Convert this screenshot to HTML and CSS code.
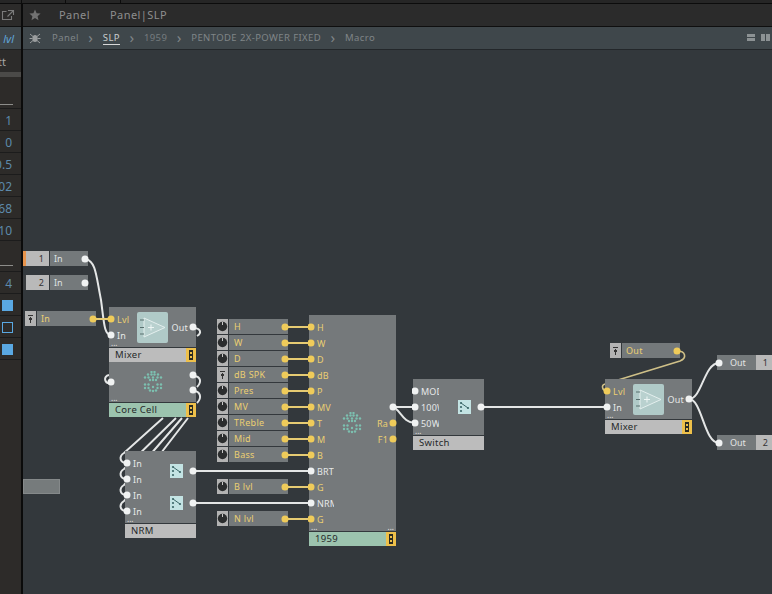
FILE: index.html
```html
<!DOCTYPE html>
<html lang="en">
<head>
<meta charset="utf-8">
<title>Panel | SLP</title>
<link rel="stylesheet" href="styles.css">
</head>
<body>
<svg class="defs" width="0" height="0" aria-hidden="true">
  <symbol id="tag" viewBox="0 0 10 14"><rect width="10" height="14" fill="#eec04a"/><rect x="3" y="2" width="4" height="10" fill="#2a2a22"/><rect x="4" y="4" width="2" height="2" fill="#eec04a"/><rect x="4" y="8" width="2" height="2" fill="#eec04a"/></symbol>
  <symbol id="knob" viewBox="0 0 11 15"><circle cx="5.5" cy="7.5" r="4.7" fill="#2b2d2e"/><rect x="5" y="3" width="1" height="3" fill="#c8c8c8"/></symbol>
  <symbol id="fader" viewBox="0 0 11 15"><rect x="3" y="4" width="5" height="1" fill="#333"/><rect x="5" y="6" width="1" height="6" fill="#333"/><rect x="4" y="7" width="3" height="2" fill="#333"/></symbol>
  <symbol id="amp" viewBox="0 0 31 31"><rect width="31" height="31" rx="2" fill="#b0cac8"/><path d="M7 6 28 15.5 7 25Z" fill="#b9d1cf" stroke="#e4efee" stroke-width="1"/><path d="M3 8h4M3 15.5h4M3 22h4" stroke="#59706f"/><path d="M11 15.5h6M14 12.5v6" stroke="#eef6f5"/></symbol>
  <symbol id="switch" viewBox="0 0 13 14"><rect width="13" height="14" fill="#c3e3e3"/><g fill="#3b6667"><circle cx="3" cy="3" r="1.1"/><circle cx="3" cy="7" r="1.1"/><circle cx="3" cy="11" r="1.1"/><circle cx="10" cy="8" r="1.1"/></g><path d="M3 3 10 8" stroke="#3b6667"/></symbol>
  <symbol id="hex" viewBox="0 0 20 22"><g fill="#7cc0b0"><circle cx="8.5" cy="1" r="1.2"/><circle cx="11.5" cy="1" r="1.2"/><circle cx="5" cy="3.5" r="1.2"/><circle cx="8.5" cy="3.5" r="1.2"/><circle cx="11.5" cy="3.5" r="1.2"/><circle cx="15" cy="3.5" r="1.2"/><circle cx="2" cy="6.5" r="1.2"/><circle cx="5.5" cy="6.5" r="1.2"/><circle cx="10" cy="6.5" r="1.2"/><circle cx="14.5" cy="6.5" r="1.2"/><circle cx="18" cy="6.5" r="1.2"/><circle cx="7" cy="9" r="1.2"/><circle cx="10" cy="9" r="1.2"/><circle cx="13" cy="9" r="1.2"/><circle cx="2" cy="13.5" r="1.2"/><circle cx="5.5" cy="13.5" r="1.2"/><circle cx="14.5" cy="13.5" r="1.2"/><circle cx="18" cy="13.5" r="1.2"/><circle cx="2" cy="17" r="1.2"/><circle cx="5.5" cy="17" r="1.2"/><circle cx="10" cy="16" r="1.2"/><circle cx="14.5" cy="17" r="1.2"/><circle cx="18" cy="17" r="1.2"/><circle cx="7" cy="19.5" r="1.2"/><circle cx="10" cy="20" r="1.2"/><circle cx="13" cy="19.5" r="1.2"/></g></symbol>
</svg>

<div class="app">
  <div class="topstrip"><span class="seg s1"></span><span class="seg s2"></span><span class="seg s3"></span></div>
  <div class="workspace">
    <aside class="sidebar">
      <div class="side-head"><svg width="14" height="12" viewBox="0 0 14 12"><path d="M5.5 2.5H1.5V10.5H10.5V7M7 1.5h5.5V6M12.5 1.5 6.5 7.5" fill="none" stroke="#7b7b7b" stroke-width="1.1"/></svg></div>
      <div class="side-crumb">lvl</div>
      <div class="side-name">Lvl tt</div>
      <div class="side-strip"></div>
      <div class="side-gap"><span class="side-rule"></span></div>
      <div class="side-row">1</div>
      <div class="side-row">0</div>
      <div class="side-row">0.5</div>
      <div class="side-row">02</div>
      <div class="side-row">68</div>
      <div class="side-row">10</div>
      <div class="side-gap2"><span class="side-rule"></span></div>
      <div class="side-row tall">4</div>
      <div class="side-row"><span class="check on"></span></div>
      <div class="side-row"><span class="check"></span></div>
      <div class="side-row"><span class="check on"></span></div>
    </aside>
    <main class="main">
      <nav class="tabs">
        <svg class="star" width="12" height="12" viewBox="0 0 12 12"><path d="M6 .5 7.6 4.2 11.6 4.6 8.6 7.2 9.5 11.2 6 9.1 2.5 11.2 3.4 7.2.4 4.6 4.4 4.2Z" fill="#727272"/></svg>
        <span class="tab">Panel</span>
        <span class="tab">Panel|SLP</span>
      </nav>
      <nav class="crumbs">
        <svg class="bug" width="12" height="12" viewBox="0 0 12 12"><ellipse cx="6" cy="6.5" rx="2.6" ry="3.6" fill="#9a9d9e"/><path d="M1 2 4 4.5M11 2 8 4.5M.5 6.5h3M11.5 6.5h-3M1 11 4 8.5M11 11 8 8.5" stroke="#9a9d9e"/></svg>
        <span class="crumb">Panel</span><span class="sep">›</span>
        <span class="crumb current">SLP</span><span class="sep">›</span>
        <span class="crumb dim">1959</span><span class="sep">›</span>
        <span class="crumb">PENTODE 2X-POWER FIXED</span><span class="sep">›</span>
        <span class="crumb">Macro</span>
        <span class="views"><i class="view-a"></i><i class="view-b"></i></span>
      </nav>
      <section class="canvas">
        <svg class="wires" width="749" height="544" viewBox="23 50 749 544" fill="none">
          <g class="w-white">
            <path d="M86 259C96 262 96 275 101 300C104 322 104 335 111 335"/>
            <path d="M193 328C201 328 202 333 197 336"/>
            <path d="M111 383C104 384 103 376 109 375"/>
            <path d="M193 376C201 376 202 382 197 387"/>
            <path d="M193 391C201 391 202 398 197 403"/>
            <path d="M127 463C119 463 119 456 124 453L163 418"/>
            <path d="M127 479C119 479 119 472 124 469L176 418"/>
            <path d="M127 495C119 495 119 488 124 485L182 418"/>
            <path d="M127 511C119 511 119 504 124 501L188 418"/>
            <path d="M193 471H311"/>
            <path d="M193 503H311"/>
            <path d="M393 407H415"/>
            <path d="M393 407C400 409 403 423 415 423"/>
            <path d="M481 407H607"/>
            <path d="M689 399C702 399 704 363 719 363"/>
            <path d="M689 399C702 399 704 443 719 443"/>
          </g>
          <g class="w-yellow">
            <path d="M94 319H111"/>
            <path d="M285 327H311M285 343H311M285 359H311M285 375H311M285 391H311M285 407H311M285 423H311M285 439H311M285 455H311M285 487H311M285 519H311"/>
          </g>
          <path class="w-olive" d="M677 351C686 351 687 358 680 361L618 380M607 391C602 391 601 385 605 384"/>
        </svg>

        <div class="stub" style="left:0;top:429px"></div>

        <div class="io" style="left:-1px;top:201px"><span class="mark orange"></span><span class="io-num left">1</span><span class="io-label">In<b class="dot w right"></b></span></div>
        <div class="io" style="left:-1px;top:225px"><span class="mark"></span><span class="io-num left">2</span><span class="io-label">In<b class="dot w right"></b></span></div>

        <div class="ctl wide" style="left:2px;top:261px"><span class="ctl-ic"><svg width="11" height="15"><use href="#fader"/></svg></span><span class="ctl-label">In<b class="dot y right"></b></span></div>

        <div class="node w87" style="left:86px;top:257px">
          <div class="body h40">
            <div class="pins"><div class="pin y"><b class="dot y"></b>Lvl</div><div class="pin"><b class="dot w"></b>In</div></div>
            <svg class="ampic" width="31" height="31"><use href="#amp"/></svg>
            <div class="pins end"><div class="pin out lower"><span>Out</span><b class="dot w"></b></div></div>
            <span class="dots">...</span>
          </div>
          <div class="title">Mixer<svg class="tagic" width="10" height="14"><use href="#tag"/></svg></div>
          <div class="body h40 core">
            <svg class="hexic" width="20" height="22"><use href="#hex"/></svg>
            <b class="dot w free" style="left:-1px;top:17px"></b>
            <b class="dot w free" style="right:0;top:10px"></b>
            <b class="dot w free" style="right:0;top:25px"></b>
            <span class="dots">...</span>
          </div>
          <div class="title green">Core Cell<svg class="tagic" width="10" height="14"><use href="#tag"/></svg></div>
        </div>

        <div class="node w71" style="left:102px;top:401px">
          <div class="body nrm">
            <div class="pins"><div class="pin"><b class="dot w"></b>In</div><div class="pin"><b class="dot w"></b>In</div><div class="pin"><b class="dot w"></b>In</div><div class="pin"><b class="dot w"></b>In</div></div>
            <svg class="swic a" width="13" height="14"><use href="#switch"/></svg>
            <svg class="swic b" width="13" height="14"><use href="#switch"/></svg>
            <b class="dot w free" style="right:0;top:17px"></b>
            <b class="dot w free" style="right:0;top:49px"></b>
            <span class="dots">...</span>
          </div>
          <div class="title">NRM</div>
        </div>

        <div class="panel-col" style="left:194px;top:269px">
          <div class="ctl"><span class="ctl-ic"><svg width="11" height="15"><use href="#knob"/></svg></span><span class="ctl-label">H<b class="dot y right"></b></span></div>
          <div class="ctl"><span class="ctl-ic"><svg width="11" height="15"><use href="#knob"/></svg></span><span class="ctl-label">W<b class="dot y right"></b></span></div>
          <div class="ctl"><span class="ctl-ic"><svg width="11" height="15"><use href="#knob"/></svg></span><span class="ctl-label">D<b class="dot y right"></b></span></div>
          <div class="ctl"><span class="ctl-ic"><svg width="11" height="15"><use href="#fader"/></svg></span><span class="ctl-label">dB SPK<b class="dot y right"></b></span></div>
          <div class="ctl"><span class="ctl-ic"><svg width="11" height="15"><use href="#knob"/></svg></span><span class="ctl-label">Pres<b class="dot y right"></b></span></div>
          <div class="ctl"><span class="ctl-ic"><svg width="11" height="15"><use href="#knob"/></svg></span><span class="ctl-label">MV<b class="dot y right"></b></span></div>
          <div class="ctl"><span class="ctl-ic"><svg width="11" height="15"><use href="#knob"/></svg></span><span class="ctl-label">TReble<b class="dot y right"></b></span></div>
          <div class="ctl"><span class="ctl-ic"><svg width="11" height="15"><use href="#knob"/></svg></span><span class="ctl-label">Mid<b class="dot y right"></b></span></div>
          <div class="ctl"><span class="ctl-ic"><svg width="11" height="15"><use href="#knob"/></svg></span><span class="ctl-label">Bass<b class="dot y right"></b></span></div>
          <div class="ctl skip"><span class="ctl-ic"><svg width="11" height="15"><use href="#knob"/></svg></span><span class="ctl-label">B lvl<b class="dot y right"></b></span></div>
          <div class="ctl skip"><span class="ctl-ic"><svg width="11" height="15"><use href="#knob"/></svg></span><span class="ctl-label">N lvl<b class="dot y right"></b></span></div>
        </div>

        <div class="node w87" style="left:286px;top:265px">
          <div class="body big">
            <div class="pins clip">
              <div class="pin y"><b class="dot y"></b>H</div><div class="pin y"><b class="dot y"></b>W</div><div class="pin y"><b class="dot y"></b>D</div><div class="pin y"><b class="dot y"></b>dB</div><div class="pin y"><b class="dot y"></b>P</div><div class="pin y"><b class="dot y"></b>MV</div><div class="pin y"><b class="dot y"></b>T</div><div class="pin y"><b class="dot y"></b>M</div><div class="pin y"><b class="dot y"></b>B</div><div class="pin"><b class="dot w"></b>BRT</div><div class="pin y"><b class="dot y"></b>G</div><div class="pin"><b class="dot w"></b>NRM</div><div class="pin y"><b class="dot y"></b>G</div>
            </div>
            <svg class="hexic mid" width="20" height="22"><use href="#hex"/></svg>
            <div class="pins end big-out"><div class="pin out"><b class="dot w"></b></div><div class="pin out y"><span>Ra</span><b class="dot y"></b></div><div class="pin out y"><span>F1</span><b class="dot y"></b></div></div>
            <span class="dots">...</span><span class="dots rt">...</span>
          </div>
          <div class="title green sep1">1959<svg class="tagic" width="10" height="14"><use href="#tag"/></svg></div>
        </div>

        <div class="node w71" style="left:390px;top:329px">
          <div class="body sw">
            <div class="pins clip wider"><div class="pin"><b class="dot w"></b>MOD</div><div class="pin"><b class="dot w"></b>100W</div><div class="pin"><b class="dot w"></b>50W</div></div>
            <svg class="swic sw1" width="13" height="14"><use href="#switch"/></svg>
            <b class="dot w free" style="right:0;top:25px"></b>
            <span class="dots">...</span>
          </div>
          <div class="title">Switch</div>
        </div>

        <div class="ctl short" style="left:587px;top:293px"><span class="ctl-ic"><svg width="11" height="15"><use href="#fader"/></svg></span><span class="ctl-label">Out<b class="dot y right"></b></span></div>

        <div class="node w87" style="left:582px;top:329px">
          <div class="body h40">
            <div class="pins"><div class="pin y"><b class="dot y"></b>Lvl</div><div class="pin"><b class="dot w"></b>In</div></div>
            <svg class="ampic" width="31" height="31"><use href="#amp"/></svg>
            <div class="pins end"><div class="pin out lower"><span>Out</span><b class="dot w"></b></div></div>
            <span class="dots">...</span>
          </div>
          <div class="title">Mixer<svg class="tagic" width="10" height="14"><use href="#tag"/></svg></div>
        </div>

        <div class="outnode" style="left:694px;top:305px"><span class="out-label"><b class="dot w"></b>Out</span><span class="io-num">1</span></div>
        <div class="outnode" style="left:694px;top:385px"><span class="out-label"><b class="dot w"></b>Out</span><span class="io-num">2</span></div>
      </section>
    </main>
  </div>
</div>
</body>
</html>
```

FILE: styles.css
```css
* { box-sizing: border-box; }
html, body { margin: 0; height: 100%; }
body {
  background: #33383c;
  font-family: "Noto Sans", sans-serif;
  font-size: 9px;
  overflow: hidden;
}
.defs { position: absolute; }
.app { width: 772px; height: 594px; display: flex; flex-direction: column; overflow: hidden; }

.topstrip { height: 4px; flex: none; display: flex; background: #262626; border-bottom: 1px solid #0c0c0c; }
.seg { border-right: 1px solid #0c0c0c; height: 3px; }
.s1 { width: 22px; }
.s2 { width: 44px; }
.s3 { width: 55px; }

.workspace { flex: 1; display: flex; min-height: 0; }

.sidebar { width: 23px; flex: none; background: #2d2b29; border-right: 2px solid #0b0b0b; display: flex; flex-direction: column; overflow: hidden; }
.side-head { height: 23px; display: flex; align-items: center; padding-left: 1px; background: #2c2b2a; border-bottom: 1px solid #111; }
.side-crumb { height: 23px; background: #3f474b; color: #5fa4d8; font-size: 11px; font-style: italic; display: flex; align-items: center; justify-content: flex-end; padding-right: 7px; border-bottom: 1px solid #222; }
.side-name { height: 22px; background: #2c2b2a; color: #a8a8a8; font-size: 11px; display: flex; align-items: center; justify-content: flex-end; padding-right: 15px; white-space: nowrap; }
.side-strip { height: 5px; background: #4b4a48; }
.side-gap { height: 32px; display: flex; align-items: flex-end; border-bottom: 1px solid #1c1c1c; }
.side-gap2 { height: 32px; display: flex; align-items: flex-end; padding-bottom: 5px; border-bottom: 1px solid #1c1c1c; margin-top: -1px; }
.side-gap .side-rule { margin-bottom: 3px; }
.side-rule { display: block; width: 13px; height: 1px; background: #8d8d8a; }
.side-row { height: 22px; flex: none; display: flex; align-items: center; justify-content: flex-end; padding: 1px 9px 0 0; color: #5d8aab; font-size: 12px; white-space: nowrap; border-bottom: 1px solid #1c1c1c; }
.check { width: 11px; height: 11px; margin-right: -1px; border: 1px solid #5aa8e2; }
.check.on { background: #5aa8e2; }

.main { flex: 1; min-width: 0; display: flex; flex-direction: column; }
.tabs { height: 23px; flex: none; display: flex; align-items: center; gap: 20px; padding: 0 0 2px 6px; background: #2b2b2b; border-bottom: 1px solid #0f0f0f; color: #8e8e8e; font-size: 11px; letter-spacing: .45px; }
.star { margin-right: -2px; margin-top: 2px; }
.crumbs { height: 23px; flex: none; display: flex; align-items: center; padding: 0 0 2px 6px; background: #3f474b; border-bottom: 1px solid #23272a; color: #7f8588; font-size: 9.5px; letter-spacing: .4px; }
.bug { margin-right: 11px; margin-top: 2px; }
.crumb.current { color: #c8cbcc; border-bottom: 1px solid #d8d8d8; line-height: 13px; height: 14px; margin-top: 2px; }
.crumb.dim { color: #767c7f; }
.sep { width: 24px; text-align: center; font-size: 15px; line-height: 15px; color: #7f8588; }
.views { margin-left: auto; margin-right: 2px; display: flex; gap: 6px; }
.views i { display: block; background: linear-gradient(#8c9294 0 3px, transparent 3px 4px, #8c9294 4px); width: 8px; height: 7px; }
.views i.view-b { width: 9px; background: linear-gradient(90deg, #8c9294 0 4px, transparent 4px 5px, #8c9294 5px); }

.canvas { flex: 1; position: relative; overflow: hidden; background: #33383c; }
.wires { position: absolute; left: 0; top: 0; }
.w-white path { stroke: #e4e6e6; stroke-width: 2; }
.w-yellow path { stroke: #e6cb73; stroke-width: 2; }
.w-olive { stroke: #cfc088; stroke-width: 1.6; }

.dot { display: block; width: 6px; height: 6px; border-radius: 50%; flex: none; }
.dot.w { background: #f0f2f2; box-shadow: 0 0 0 .5px #f0f2f2; }
.dot.y { background: #efcb5a; box-shadow: 0 0 0 .5px #efcb5a; }
.dot.free { position: absolute; }

.stub { position: absolute; width: 37px; height: 15px; background: #767b7c; border: 1px solid #85898a; }

.io { position: absolute; display: flex; height: 15px; color: #e2e2e2; }
.mark { width: 4px; background: #3a3d3f; }
.mark.orange { background: #e8944c; }
.io-num { width: 16px; background: #b9b9b9; color: #333; display: flex; align-items: center; justify-content: flex-end; padding-right: 4px; font-size: 9px; }
.io-num.left { width: 23px; padding-right: 5px; margin-right: 1px; }
.io-label { width: 38px; background: #74797b; display: flex; align-items: center; justify-content: space-between; padding-left: 4px; color: #dfe2e2; }

.ctl { display: flex; height: 15px; margin-bottom: 1px; }
.ctl.wide, .ctl.short { position: absolute; }
.ctl.skip { margin-top: 16px; }
.ctl-ic { width: 11px; background: #b3b3b3; margin-right: 1px; display: flex; }
.ctl-label { width: 59px; background: #74797b; color: #ebcf72; padding-left: 5px; letter-spacing: .3px; display: flex; align-items: center; justify-content: space-between; }
.ctl.wide .ctl-label { padding-left: 4px; }
.ctl.short .ctl-label { width: 58px; padding-left: 4px; }
.panel-col { position: absolute; display: flex; flex-direction: column; }

.node { position: absolute; display: flex; flex-direction: column; }
.w87 { width: 87px; }
.w71 { width: 71px; }
.body { position: relative; background: #75797b; display: flex; align-items: flex-start; }
.h40 { height: 40px; }
.core { justify-content: center; align-items: center; }
.nrm { height: 72px; }
.big { height: 216px; }
.sw { height: 56px; }
.title { position: relative; height: 14px; margin-top: 1px; background: #bcbcbc; color: #26292a; font-size: 9.5px; letter-spacing: .3px; line-height: 13px; padding-left: 6px; }
.title.green { background: #9cc3ae; }
.tagic { position: absolute; right: 0; top: 0; }
.pins { display: flex; flex-direction: column; padding-top: 4px; width: 28px; flex: none; }
.pins.clip { overflow: hidden; margin-left: -1px; width: 26px; }
.pins.clip.wider { width: 27px; }
.pins.end { flex: 1; padding-top: 12px; }
.pins.big-out { position: absolute; right: 0; top: 80px; padding-top: 4px; width: 30px; }
.big-out .pin { justify-content: flex-end; }
.pin { height: 16px; display: flex; align-items: center; gap: 3px; color: #e6e8e8; white-space: nowrap; margin-left: -1px; letter-spacing: .2px; }
.pins.clip .pin { margin-left: 0; }
.pin.y { color: #ebcf72; }
.pin.out { justify-content: flex-end; margin-left: 0; gap: 2px; }
.ampic { margin-top: 5px; flex: none; }
.hexic { flex: none; }
.hexic.mid { position: absolute; left: 33px; top: 97px; }
.swic { position: absolute; }
.swic.a { right: 13px; top: 13px; }
.swic.b { right: 13px; top: 45px; }
.swic.sw1 { right: 13px; top: 21px; }
.dots { position: absolute; left: 2px; bottom: 1px; font-size: 8px; line-height: 6px; color: #e8e8e8; }
.dots.rt { left: auto; right: 2px; }
.outnode { position: absolute; display: flex; height: 15px; }
.out-label { width: 39px; background: #74797b; color: #e2e4e4; display: flex; align-items: center; gap: 8px; }
.out-label .dot { margin-left: -1px; }
```
